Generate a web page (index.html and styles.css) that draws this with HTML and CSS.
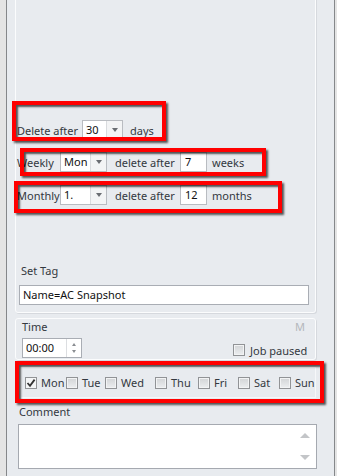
FILE: index.html
```html
<!DOCTYPE html>
<html>
<head>
<meta charset="utf-8">
<link rel="stylesheet" href="styles.css">
</head>
<body>
<div class="window">
  <div class="group g1">
    <div class="row r1">
      <span class="lbl w65">Delete after</span>
      <div class="combo w41"><span class="val">30</span><span class="drop"><i></i></span></div>
      <span class="unit u7">days</span>
    </div>
    <div class="row r2">
      <span class="lbl w43">Weekly</span>
      <div class="combo w47"><span class="val">Mon</span><span class="drop"><i></i></span></div>
      <span class="lbl w65 ml8">delete after</span>
      <div class="input w27">7</div>
      <span class="unit u5">weeks</span>
    </div>
    <div class="row r3">
      <span class="lbl w43">Monthly</span>
      <div class="combo w47"><span class="val">1.</span><span class="drop"><i></i></span></div>
      <span class="lbl w65 ml8">delete after</span>
      <div class="input w27">12</div>
      <span class="unit u5">months</span>
    </div>
    <div class="tag-label">Set Tag</div>
    <div class="textbox">Name=AC Snapshot</div>
  </div>

  <div class="group g2">
    <div class="g2-head"><span>Time</span><span class="mflag">M</span></div>
    <div class="g2-row">
      <div class="spinner">
        <span class="val">00:00</span>
        <span class="spin"><i class="up"></i><i class="down"></i></span>
      </div>
      <div class="job"><span class="chk"></span><span>Job paused</span></div>
    </div>
  </div>

  <div class="days">
    <div class="day"><span class="chk on"><svg width="10" height="10" viewBox="0 0 10 10"><path d="M1.5 5 L4 7.8 L8.6 1.6" fill="none" stroke="#333" stroke-width="1.8"/></svg></span><span>Mon</span></div>
    <div class="day"><span class="chk"></span><span>Tue</span></div>
    <div class="day"><span class="chk"></span><span>Wed</span></div>
    <div class="day"><span class="chk"></span><span>Thu</span></div>
    <div class="day"><span class="chk"></span><span>Fri</span></div>
    <div class="day"><span class="chk"></span><span>Sat</span></div>
    <div class="day"><span class="chk"></span><span>Sun</span></div>
  </div>

  <div class="comment-label">Comment</div>
  <div class="textarea">
    <span class="sb up"></span>
    <span class="sb down"></span>
  </div>

  <div class="mark m1"></div>
  <div class="mark m2"></div>
  <div class="mark m3"></div>
  <div class="mark m4"></div>
</div>
</body>
</html>
```

FILE: styles.css
```css
* { box-sizing: border-box; }
html, body { margin: 0; padding: 0; }
body {
  background: #e4e4e4;
  width: 337px;
  height: 476px;
  overflow: hidden;
  font-family: "Noto Sans", "Liberation Sans", sans-serif;
  font-size: 11px;
  color: #333840;
}
.window {
  position: relative;
  margin-left: 6px;
  width: 329px;
  height: 476px;
  background: #e8ebef;
  border-left: 1px solid #85878a;
  border-right: 1px solid #85878a;
  overflow: hidden;
}
.group {
  margin-left: 8px;
  width: 301px;
  border: 1px solid #fbfcfd;
  border-radius: 3px;
  box-shadow: 1px 1px 0 #d6d9de;
}
.g1 {
  margin-top: -6px;
  padding: 125px 0 7px 0;
}
.row {
  display: flex;
  align-items: center;
  height: 20px;
  padding-left: 1px;
  white-space: nowrap;
}
.r2 { margin-top: 12px; }
.r3 { margin-top: 13px; }
.lbl { display: inline-block; }
.w65 { width: 65px; }
.w43 { width: 43px; }
.ml8 { margin-left: 8px; }
.u7 { margin-left: 7px; }
.u5 { margin-left: 5px; }
.combo {
  height: 20px;
  display: flex;
  background: #fff;
  border: 1px solid #b9bcc1;
  color: #111;
}
.w41 { width: 41px; }
.w47 { width: 47px; }
.combo .val { flex: 1; padding-left: 3px; line-height: 18px; }
.combo .drop {
  width: 16px;
  border-left: 1px solid #d9dbde;
  background: #f3f4f5;
  display: flex;
  align-items: center;
  justify-content: center;
}
.combo .drop i {
  width: 0; height: 0;
  border-left: 3.5px solid transparent;
  border-right: 3.5px solid transparent;
  border-top: 4px solid #6a6d72;
}
.input {
  height: 20px;
  background: #fff;
  border: 1px solid #b9bcc1;
  color: #111;
  padding-left: 4px;
  line-height: 18px;
}
.w27 { width: 27px; }
.tag-label {
  margin-top: 58px;
  padding-left: 5px;
  line-height: 16px;
}
.textbox {
  margin-top: 6px;
  margin-left: 3px;
  width: 290px;
  height: 20px;
  background: #fff;
  border: 1px solid #a9adb4;
  color: #111;
  padding-left: 3px;
  line-height: 18px;
}
.g2 {
  margin-top: 5px;
  padding: 0 0 1px 0;
}
.g2-head {
  display: flex;
  justify-content: space-between;
  line-height: 16px;
  padding: 0 10px 0 6px;
}
.mflag { color: #b4b7bb; }
.g2-row {
  display: flex;
  align-items: flex-end;
  margin-top: 3px;
  padding-left: 6px;
}
.spinner {
  width: 60px;
  height: 20px;
  display: flex;
  background: #fff;
  border: 1px solid #a9adb4;
  color: #111;
}
.spinner .val { flex: 1; padding-left: 3px; line-height: 18px; }
.spin {
  width: 15px;
  border-left: 1px solid #dcdee1;
  display: flex;
  flex-direction: column;
  align-items: center;
  justify-content: center;
  gap: 4px;
}
.spin i { width: 0; height: 0; border-left: 2.5px solid transparent; border-right: 2.5px solid transparent; }
.spin .up { border-bottom: 3px solid #8a8d92; }
.spin .down { border-top: 3px solid #8a8d92; }
.job {
  margin-left: 151px;
  display: flex;
  align-items: center;
  gap: 5px;
  height: 16px;
}
.chk {
  width: 12px;
  height: 12px;
  border: 1px solid #919396;
  background: linear-gradient(#d2d4d6, #eceef0);
  box-shadow: inset 0 0 0 1px #f2f3f4;
  display: flex;
  align-items: center;
  justify-content: center;
  flex: none;
}
.chk.on { background: #f4f5f6; box-shadow: none; }
.days {
  margin: 7px 0 0 13px;
  width: 296px;
  height: 31px;
  border: 1px solid #f6f7f9;
  display: grid;
  grid-template-columns: 41px 39px 50px 43px 40px 41px auto;
  align-items: center;
  padding-left: 4px;
}
.day {
  display: flex;
  align-items: center;
  gap: 4px;
}
.comment-label {
  margin: 6px 0 0 12px;
  line-height: 16px;
}
.textarea {
  position: relative;
  margin: 4px 0 0 11px;
  width: 299px;
  height: 45px;
  background: #fff;
  border: 1px solid #a5a9b0;
}
.sb {
  position: absolute;
  right: 6px;
  width: 0; height: 0;
  border-left: 5px solid transparent;
  border-right: 5px solid transparent;
}
.sb.up { top: 8px; border-bottom: 5px solid #c3c5c8; }
.sb.down { bottom: 8px; border-top: 5px solid #c3c5c8; }
.mark {
  position: absolute;
  border: 4px solid #ff0000;
  box-shadow: 2px 2px 2px rgba(0,0,0,0.65), inset 2px 2px 2px rgba(0,0,0,0.65);
}
.m1 { left: 5px; top: 101px; width: 154px; height: 40px; }
.m2 { left: 13px; top: 148px; width: 246px; height: 28px; }
.m3 { left: 7px; top: 181px; width: 268px; height: 32px; }
.m4 { left: 8px; top: 361px; width: 309px; height: 42px; }
```
